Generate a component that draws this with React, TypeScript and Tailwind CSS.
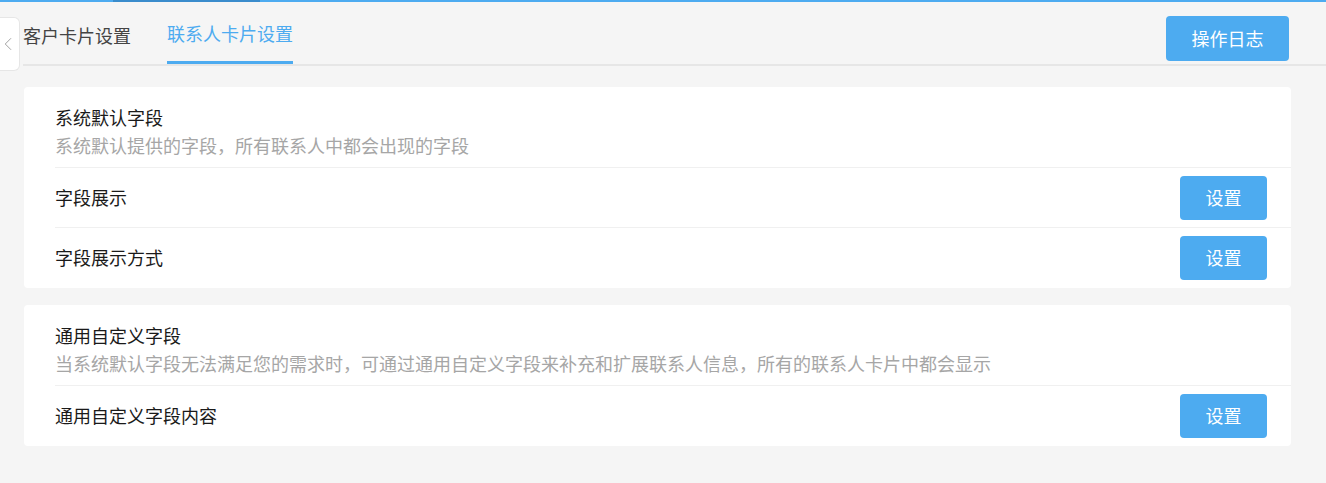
import { ChevronLeft } from 'lucide-react';

const font = { fontFamily: '"Microsoft YaHei", "Noto Sans CJK SC", "Noto Sans", sans-serif' };

function SetButton() {
  return (
    <button className="w-[87px] h-[44px] rounded-[4px] bg-[#4dabf0] text-white text-[18px]">设置</button>
  );
}

function Row({ label }: { label: string }) {
  return (
    <div className="flex items-center justify-between h-[60px] border-t border-[#f0f0f0] pr-[24px]">
      <span className="text-[18px] text-[#1a1a1a]">{label}</span>
      <SetButton />
    </div>
  );
}

function Card({ title, desc, rows }: { title: string; desc: string; rows: string[] }) {
  return (
    <div className="bg-white rounded-[4px] pl-[31px] pb-[1px]">
      <div className="pt-[18px] pb-[10px] leading-[24px]">
        <div className="text-[18px] text-[#1a1a1a]">{title}</div>
        <div className="text-[18px] text-[#a6a6a6] mt-[4px]">{desc}</div>
      </div>
      {rows.map(r => <Row key={r} label={r} />)}
    </div>
  );
}

export default function App() {
  return (
    <div className="relative min-h-[483px] bg-[#f5f5f5]" style={font}>
      {/* top progress bar */}
      <div className="relative h-[2px] bg-[#4dabf0]">
        <div className="absolute left-[113px] top-0 h-[2px] w-[147px] bg-[#3a8ccc]" />
      </div>

      {/* collapse tab */}
      <div className="absolute left-0 top-[17px] w-[20px] h-[54px] bg-white border border-l-0 border-[#e6e6e6] rounded-r-[6px] flex items-center justify-center">
        <ChevronLeft className="w-[22px] h-[22px] text-[#999] -ml-[3px]" strokeWidth={1} />
      </div>

      <div className="pl-[23px]">
        <div className="flex items-start justify-between h-[64px] border-b-2 border-[#e6e6e6] pr-[37px]">
          <div className="flex h-[62px] gap-[36px]">
            <div className="flex items-center text-[18px] text-[#444] h-full pt-[4px]">客户卡片设置</div>
            <div className="flex items-center text-[18px] text-[#4dabf0] h-full pt-[4px] border-b-[3px] border-[#4dabf0]">联系人卡片设置</div>
          </div>
          <button className="w-[123px] h-[45px] mt-[14px] rounded-[4px] bg-[#4dabf0] text-white text-[18px]">操作日志</button>
        </div>

        <div className="pt-[21px] pr-[35px] pl-[1px] flex flex-col gap-[17px]">
          <Card
            title="系统默认字段"
            desc="系统默认提供的字段，所有联系人中都会出现的字段"
            rows={['字段展示', '字段展示方式']}
          />
          <Card
            title="通用自定义字段"
            desc="当系统默认字段无法满足您的需求时，可通过通用自定义字段来补充和扩展联系人信息，所有的联系人卡片中都会显示"
            rows={['通用自定义字段内容']}
          />
        </div>
      </div>
    </div>
  );
}
